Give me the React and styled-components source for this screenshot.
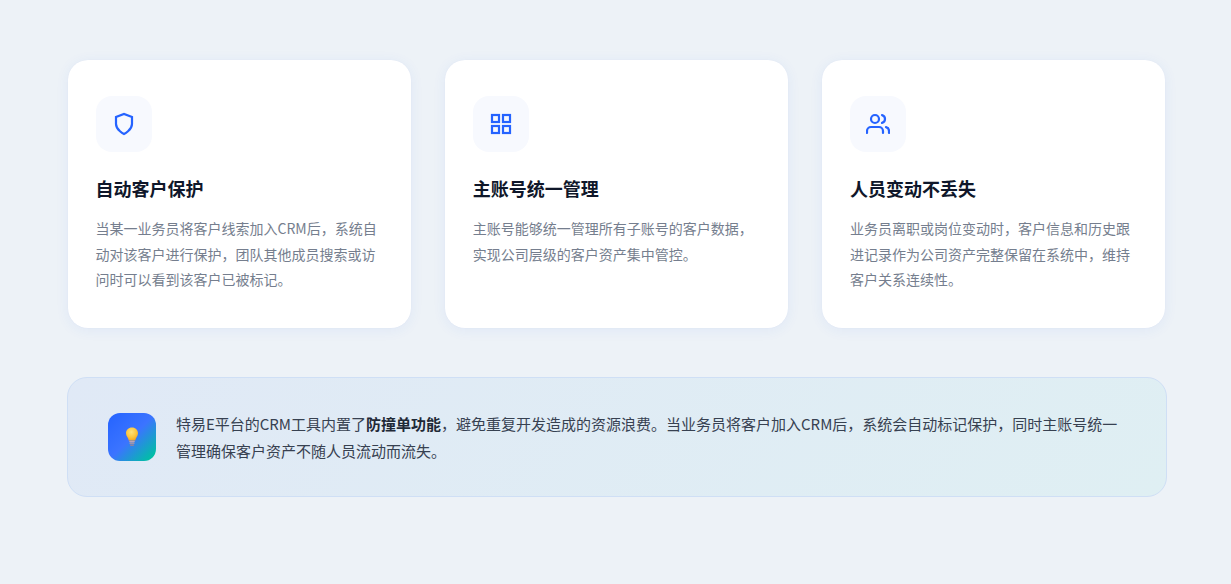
import React from "react";
import styled, { createGlobalStyle } from "styled-components";
import { FiShield, FiGrid, FiUsers } from "react-icons/fi";

const GlobalStyle = createGlobalStyle`
  * {
    box-sizing: border-box;
  }
  html, body {
    margin: 0;
    padding: 0;
  }
  body {
    background: #edf2f7;
    font-family: "Noto Sans CJK SC", "Noto Sans", sans-serif;
  }
`;

const Page = styled.div`
  height: 584px;
  overflow: hidden;
  padding: 60px 0 0 67.5px;
`;

const Content = styled.div`
  width: 1098px;
`;

const CardGrid = styled.div`
  display: grid;
  grid-template-columns: repeat(3, 1fr);
  gap: 33.6px;
  margin-bottom: 49px;
`;

const Card = styled.div`
  height: 268px;
  padding: 36px 28px;
  background: #fff;
  border-radius: 20px;
  box-shadow: 0 0 1px rgba(37, 70, 160, 0.08), 0 2px 14px rgba(37, 99, 235, 0.07);
`;

const IconTile = styled.div`
  width: 56px;
  height: 56px;
  margin-bottom: 23px;
  display: flex;
  align-items: center;
  justify-content: center;
  font-size: 24px;
  color: #2563ff;
  background: #f7f9fe;
  border-radius: 16px;

  svg {
    stroke-width: 2.2;
    stroke-linejoin: miter;
  }
`;

const CardTitle = styled.h3`
  margin: 0 0 14.4px;
  font-size: 18px;
  line-height: 27px;
  font-weight: 700;
  color: #0f172a;
`;

const CardText = styled.p`
  margin: 0;
  font-size: 14px;
  line-height: 25.2px;
  color: #757e8e;
`;

const Banner = styled.div`
  height: 120px;
  margin: 0 -1px 0 -0.6px;
  padding: 0 40px;
  display: flex;
  align-items: center;
  gap: 20px;
  border: 1px solid #cfdff5;
  border-radius: 20px;
  background: linear-gradient(135deg, #e0e9f6, #dfeff3);
`;

const BulbTile = styled.div`
  flex: none;
  width: 48px;
  height: 48px;
  display: flex;
  align-items: center;
  justify-content: center;
  border-radius: 12px;
  background: linear-gradient(135deg, #2563ff 0%, #3b74ff 50%, #00bfa5 92%);
`;

const BannerText = styled.p`
  margin: 0;
  font-size: 15px;
  line-height: 27px;
  color: #374151;

  strong {
    font-weight: 700;
    color: #1f2937;
  }
`;

const BulbIcon = () => (
  <svg width="14" height="20" viewBox="0 0 14 20" aria-hidden="true">
    <defs>
      <radialGradient id="bulbGlow" cx="0.45" cy="0.35" r="0.7">
        <stop offset="0" stopColor="#ffe27a" />
        <stop offset="0.6" stopColor="#fdc53a" />
        <stop offset="1" stopColor="#f59f1c" />
      </radialGradient>
    </defs>
    <path
      d="M7 0.5C3.4 0.5 1 3.1 1 6.2c0 2.9 2.2 4.3 2.8 7.3h6.4c.6-3 2.8-4.4 2.8-7.3C13 3.1 10.6.5 7 .5z"
      fill="url(#bulbGlow)"
    />
    <rect x="4.2" y="13.8" width="5.6" height="1.6" rx="0.8" fill="#b9a5b8" />
    <rect x="4.4" y="15.6" width="5.2" height="1.6" rx="0.8" fill="#9a94ad" />
    <rect x="5" y="17.4" width="4" height="1.5" rx="0.7" fill="#8a86a0" />
  </svg>
);

const cards = [
  {
    icon: FiShield,
    title: "自动客户保护",
    text: "当某一业务员将客户线索加入CRM后，系统自动对该客户进行保护，团队其他成员搜索或访问时可以看到该客户已被标记。",
  },
  {
    icon: FiGrid,
    title: "主账号统一管理",
    text: "主账号能够统一管理所有子账号的客户数据，实现公司层级的客户资产集中管控。",
  },
  {
    icon: FiUsers,
    title: "人员变动不丢失",
    text: "业务员离职或岗位变动时，客户信息和历史跟进记录作为公司资产完整保留在系统中，维持客户关系连续性。",
  },
];

const App = () => {
  return (
    <Page>
      <GlobalStyle />
      <Content>
        <CardGrid>
          {cards.map(({ icon: Icon, title, text }) => (
            <Card key={title}>
              <IconTile>
                <Icon />
              </IconTile>
              <CardTitle>{title}</CardTitle>
              <CardText>{text}</CardText>
            </Card>
          ))}
        </CardGrid>
        <Banner>
          <BulbTile>
            <BulbIcon />
          </BulbTile>
          <BannerText>
            特易E平台的CRM工具内置了<strong>防撞单功能</strong>
            ，避免重复开发造成的资源浪费。当业务员将客户加入CRM后，系统会自动标记保护，同时主账号统一管理确保客户资产不随人员流动而流失。
          </BannerText>
        </Banner>
      </Content>
    </Page>
  );
};

export default App;
